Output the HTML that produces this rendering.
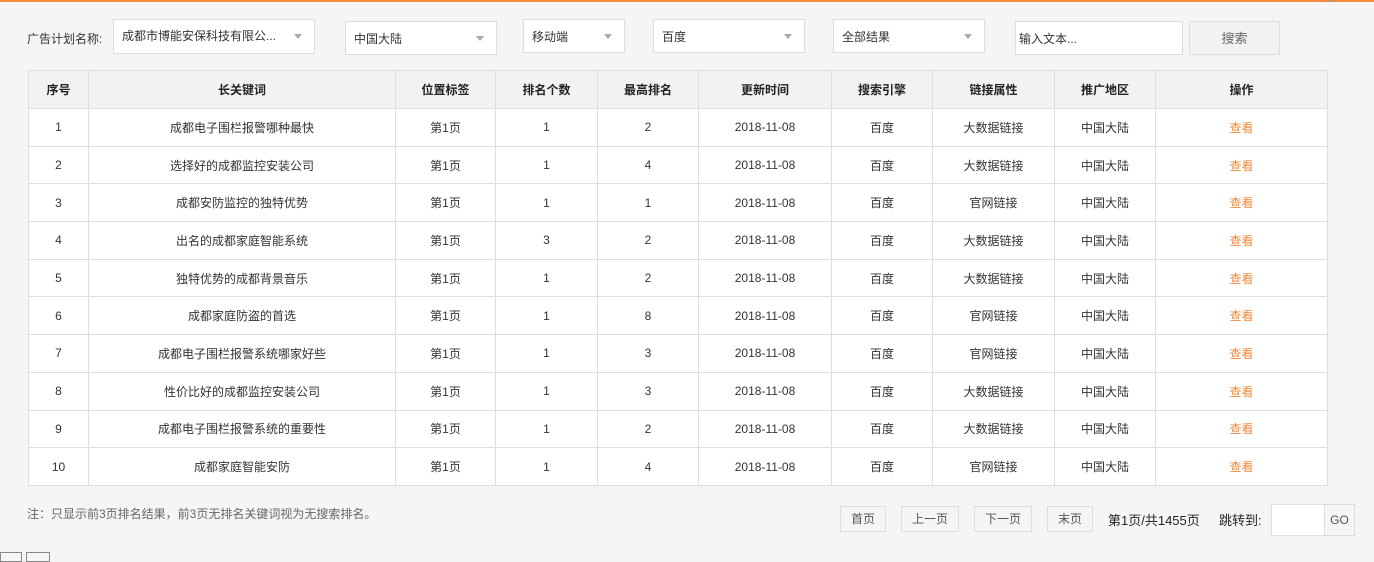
<!DOCTYPE html>
<html><head><meta charset="utf-8"><style>
*{box-sizing:border-box;margin:0;padding:0}
body{width:1374px;height:557px;background:#f5f5f5;font-family:"Liberation Sans","Noto Sans CJK SC",sans-serif;font-size:12px;color:#333;position:relative;overflow:hidden}
.top{position:absolute;left:0;top:0;width:1374px;height:2px;background:#f58a3c}
.abs{position:absolute}
.sel{position:absolute;background:#fff;border:1px solid #ddd;height:34px;padding-left:8px;line-height:34px;color:#333}
.sel:after{content:"";position:absolute;right:12px;top:14px;border-left:4px solid transparent;border-right:4px solid transparent;border-top:5px solid #aaa}
table{position:absolute;left:28px;top:70px;border-collapse:collapse;background:#fff;table-layout:fixed}
td,th{border:1px solid #ddd;text-align:center;height:37.7px;font-size:12px}
th{background:#f2f2f2;font-weight:bold;color:#222;height:38px}
.o{color:#f08a3c}
.pb{position:absolute;top:506px;height:26px;border:1px solid #ddd;background:#f5f5f5;line-height:24px;text-align:center;color:#555}
</style></head><body>
<div class="top"></div>
<div class="abs" style="left:1326px;top:0;width:8px;height:2px;background:#c8945a"></div>
<div class="abs" style="left:27px;top:31px;line-height:16px">广告计划名称:</div>
<div class="sel" style="left:113px;top:19px;width:202px;height:35px;line-height:33px">成都市博能安保科技有限公...</div>
<div class="sel" style="left:345px;top:21px;width:152px">中国大陆</div>
<div class="sel" style="left:523px;top:19px;width:102px">移动端</div>
<div class="sel" style="left:653px;top:19px;width:152px">百度</div>
<div class="sel" style="left:833px;top:19px;width:152px">全部结果</div>
<div class="abs" style="left:1015px;top:21px;width:168px;height:34px;background:#fff;border:1px solid #ddd;line-height:34px;padding-left:3px">输入文本...</div>
<div class="abs" style="left:1189px;top:21px;width:91px;height:34px;background:#f2f2f2;border:1px solid #ddd;line-height:34px;text-align:center;font-size:13px;color:#666">搜索</div>
<table>
<colgroup><col style="width:60px"><col style="width:307px"><col style="width:100px"><col style="width:102px"><col style="width:101px"><col style="width:133px"><col style="width:101px"><col style="width:122px"><col style="width:101px"><col style="width:172px"></colgroup>
<tr><th>序号</th><th>长关键词</th><th>位置标签</th><th>排名个数</th><th>最高排名</th><th>更新时间</th><th>搜索引擎</th><th>链接属性</th><th>推广地区</th><th>操作</th></tr>
<tr><td>1</td><td>成都电子围栏报警哪种最快</td><td>第1页</td><td>1</td><td>2</td><td>2018-11-08</td><td>百度</td><td>大数据链接</td><td>中国大陆</td><td class="o">查看</td></tr>
<tr><td>2</td><td>选择好的成都监控安装公司</td><td>第1页</td><td>1</td><td>4</td><td>2018-11-08</td><td>百度</td><td>大数据链接</td><td>中国大陆</td><td class="o">查看</td></tr>
<tr><td>3</td><td>成都安防监控的独特优势</td><td>第1页</td><td>1</td><td>1</td><td>2018-11-08</td><td>百度</td><td>官网链接</td><td>中国大陆</td><td class="o">查看</td></tr>
<tr><td>4</td><td>出名的成都家庭智能系统</td><td>第1页</td><td>3</td><td>2</td><td>2018-11-08</td><td>百度</td><td>大数据链接</td><td>中国大陆</td><td class="o">查看</td></tr>
<tr><td>5</td><td>独特优势的成都背景音乐</td><td>第1页</td><td>1</td><td>2</td><td>2018-11-08</td><td>百度</td><td>大数据链接</td><td>中国大陆</td><td class="o">查看</td></tr>
<tr><td>6</td><td>成都家庭防盗的首选</td><td>第1页</td><td>1</td><td>8</td><td>2018-11-08</td><td>百度</td><td>官网链接</td><td>中国大陆</td><td class="o">查看</td></tr>
<tr><td>7</td><td>成都电子围栏报警系统哪家好些</td><td>第1页</td><td>1</td><td>3</td><td>2018-11-08</td><td>百度</td><td>官网链接</td><td>中国大陆</td><td class="o">查看</td></tr>
<tr><td>8</td><td>性价比好的成都监控安装公司</td><td>第1页</td><td>1</td><td>3</td><td>2018-11-08</td><td>百度</td><td>大数据链接</td><td>中国大陆</td><td class="o">查看</td></tr>
<tr><td>9</td><td>成都电子围栏报警系统的重要性</td><td>第1页</td><td>1</td><td>2</td><td>2018-11-08</td><td>百度</td><td>大数据链接</td><td>中国大陆</td><td class="o">查看</td></tr>
<tr><td>10</td><td>成都家庭智能安防</td><td>第1页</td><td>1</td><td>4</td><td>2018-11-08</td><td>百度</td><td>官网链接</td><td>中国大陆</td><td class="o">查看</td></tr>
</table>
<div class="abs" style="left:27px;top:506px;color:#666;line-height:16px">注：只显示前3页排名结果，前3页无排名关键词视为无搜索排名。</div>
<div class="pb" style="left:840px;width:46px">首页</div>
<div class="pb" style="left:901px;width:58px">上一页</div>
<div class="pb" style="left:974px;width:58px">下一页</div>
<div class="pb" style="left:1047px;width:46px">末页</div>
<div class="abs" style="left:1108px;top:510px;color:#222;font-size:13px">第1页/共1455页</div>
<div class="abs" style="left:1219px;top:510px;color:#222;font-size:13px">跳转到:</div>
<div class="abs" style="left:1271px;top:504px;width:84px;height:32px;border:1px solid #ddd;background:#fff"></div>
<div class="abs" style="left:1324px;top:505px;width:30px;height:30px;border-left:1px solid #ddd;background:#f5f5f5;line-height:30px;text-align:center;color:#555">GO</div>
<div class="abs" style="left:0;top:552px;width:22px;height:10px;border:1px solid #888;background:#f5f5f5"></div>
<div class="abs" style="left:26px;top:552px;width:24px;height:10px;border:1px solid #888;background:#f5f5f5"></div>
</body></html>
